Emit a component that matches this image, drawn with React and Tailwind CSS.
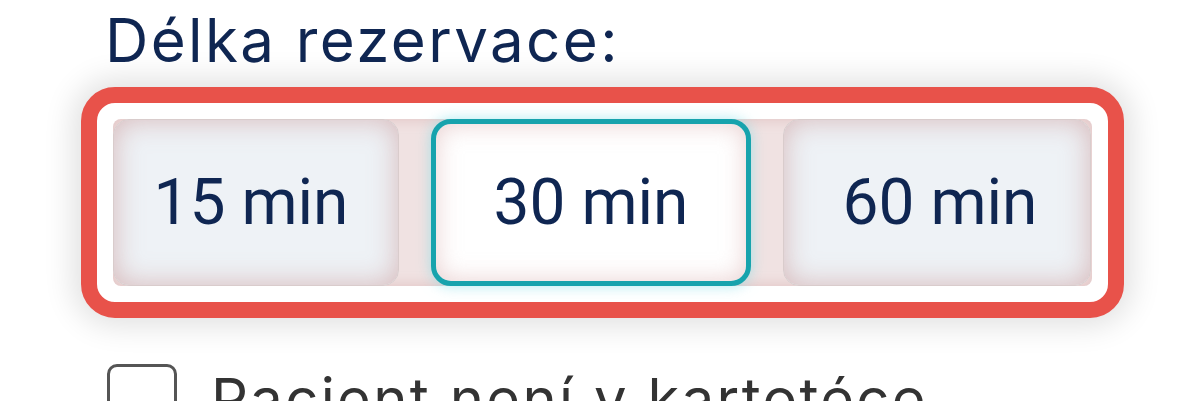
import React from "react";

export default function App() {
  return (
    <div className="w-[1200px] h-[401px] bg-white overflow-hidden pl-[81px] pt-[10px]" style={{ fontFamily: "Inter, 'Noto Sans', sans-serif" }}>
      <div className="pl-[24px] text-[60px] leading-none text-[#0f2652] tracking-[0.04em] h-[60px]">Délka rezervace:</div>
      <div className="mt-[17px] w-[1043px] h-[231px] rounded-[34px] border-[16px] border-[#e8524a] bg-white p-[16px] shadow-[0_0_30px_8px_rgba(0,0,0,0.12)]">
        <div className="h-full flex gap-[32px] rounded-[8px] bg-[#f0e2e2] shadow-[inset_0_0_14px_rgba(200,140,140,0.4)]" style={{ fontFamily: "Roboto, 'Liberation Sans', sans-serif" }}>
          <div className="w-[286px] h-full rounded-[16px] border border-[#d9cccc] bg-[#eef2f6] shadow-[inset_0_0_28px_rgba(205,160,160,0.7)] flex items-center justify-center pr-[10px] text-[64px] text-[#0f2652]">
            15 min
          </div>
          <div className="w-[320px] h-full rounded-[20px] border-[5px] border-[#17a3ad] bg-white shadow-[inset_0_0_24px_rgba(215,170,170,0.55),0_0_14px_rgba(120,220,230,0.6)] flex items-center justify-center text-[64px] text-[#0f2652]">
            30 min
          </div>
          <div className="w-[308px] h-full rounded-[16px] border border-[#d9cccc] bg-[#eef2f6] shadow-[inset_0_0_28px_rgba(205,160,160,0.7)] flex items-center justify-center text-[64px] text-[#0f2652] pl-[6px]">
            60 min
          </div>
        </div>
      </div>
      <div className="mt-[46px] flex items-start pl-[26px] gap-[34px]">
        <div className="w-[70px] h-[70px] shrink-0 rounded-[10px] border-[3px] border-[#555]" />
        <div className="text-[58px] leading-none text-[#333] tracking-[0.04em] mt-[6px]">Pacient není v kartotéce</div>
      </div>
    </div>
  );
}
